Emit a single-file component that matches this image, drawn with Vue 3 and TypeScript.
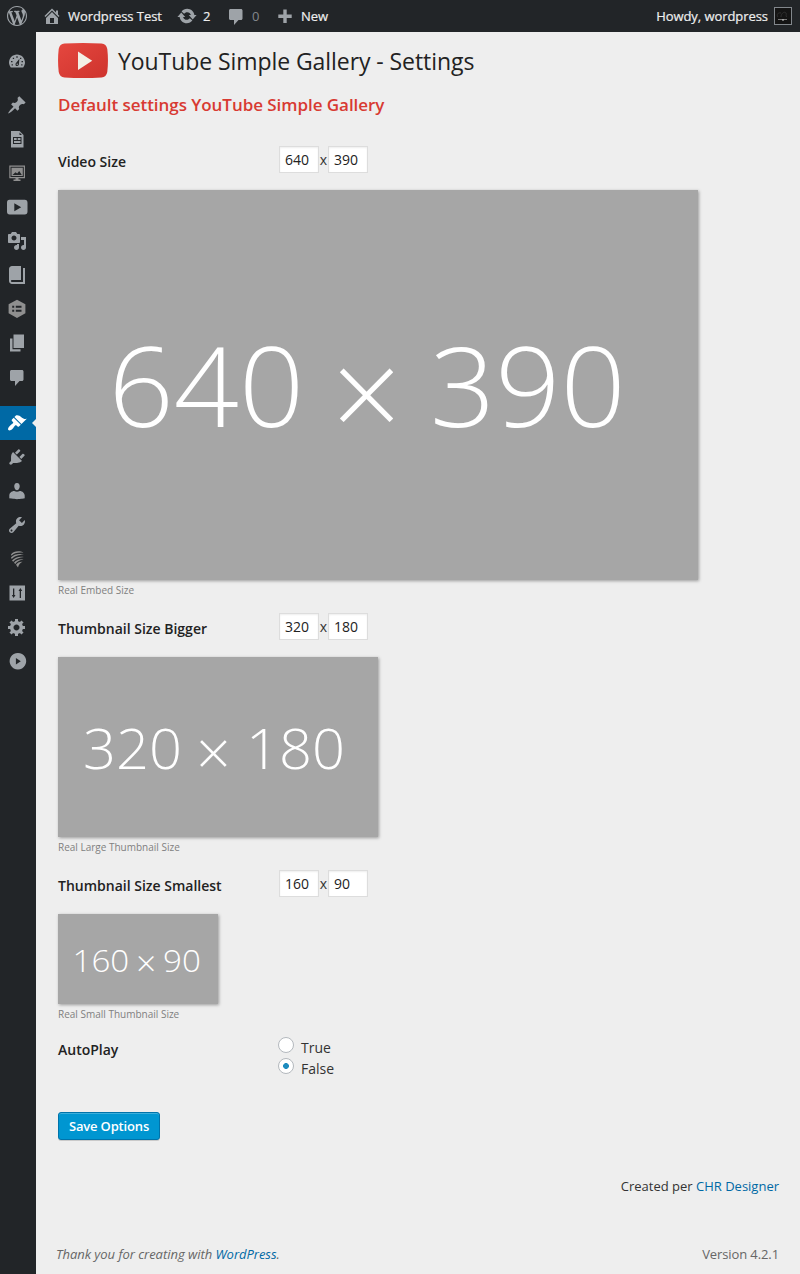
<script setup lang="ts">
import { ref } from 'vue'

interface MenuIcon {
  name: string
  d: string
  gap?: number
  active?: boolean
  muted?: boolean
}

interface Label {
  x: number
  y: number
  size: number
  length?: number
}

interface SizeOption {
  id: string
  label: string
  width: number
  height: number
  caption: string
  w: Label
  cross: Label
  h: Label
}

const logoPath =
  'M20 10c0-5.51-4.49-10-10-10C4.48 0 0 4.49 0 10c0 5.52 4.48 10 10 10 5.51 0 10-4.48 10-10zM7.78 15.37L4.37 6.22c.55-.02 1.17-.08 1.17-.08.5-.06.44-1.13-.06-1.11 0 0-1.45.11-2.37.11-.18 0-.37 0-.58-.01C4.12 2.69 6.87 1.11 10 1.11c2.33 0 4.45.87 6.05 2.34-.68-.11-1.65.39-1.65 1.58 0 .74.45 1.36.9 2.1.35.61.55 1.36.55 2.46 0 1.49-1.4 5-1.4 5l-3.03-8.37c.54-.02.82-.17.82-.17.5-.05.44-1.25-.06-1.22 0 0-1.44.12-2.38.12-.87 0-2.33-.12-2.33-.12-.5-.03-.56 1.2-.06 1.22l.92.08 1.26 3.41zM17.41 10c.24-.64.74-1.87.43-4.25.7 1.29 1.05 2.71 1.05 4.25 0 3.29-1.73 6.24-4.4 7.78.97-2.59 1.94-5.2 2.92-7.78zM6.1 18.09C3.12 16.65 1.11 13.53 1.11 10c0-1.3.23-2.48.72-3.59C3.25 10.3 4.67 14.2 6.1 18.09zm4.03-6.63l2.58 6.98c-.86.29-1.76.45-2.71.45-.79 0-1.57-.11-2.29-.33.81-2.38 1.62-4.74 2.42-7.1z'
const homePath =
  'M16 8.5l1.53 1.53-1.06 1.06L10 4.6l-6.47 6.49-1.06-1.06L10 2.5l4 4v-2h2v4zm-6-2.46l6 5.99V18H4v-5.97zM12 17v-5H8v5h4z'
const updatePath =
  'M10.2 2.800c3.700 0 6.700 2.800 7.200 6.300h2.200l-3.900 4.400-3.900-4.400h2.100c-.45-1.700-1.800-2.900-3.700-2.900-1.300 0-2.400.6-3.100 1.500L4.600 5.400C5.900 3.800 7.900 2.800 10.200 2.800zm-.4 14.400c-3.700 0-6.700-2.800-7.200-6.300H.4l3.900-4.400 3.900 4.400H6.100c.45 1.700 1.800 2.900 3.700 2.900 1.300 0 2.400-.6 3.100-1.500l2.500 2.300c-1.300 1.600-3.300 2.600-5.600 2.600z'
const commentPath =
  'M4.5 3h10.500c.8 0 1.500.7 1.500 1.500v8c0 .8-.7 1.500-1.500 1.500h-2.500L8 19v-5H4.500c-.8 0-1.500-.7-1.500-1.500v-8C3 3.700 3.700 3 4.500 3z'

const menu: MenuIcon[] = [
  {
    name: 'Dashboard',
    d: 'M3.8 16.500h12.400c1.100-1.400 1.800-3.100 1.800-4.900 0-4.400-3.600-8-8-8s-8 3.600-8 8c0 1.800.7 3.500 1.800 4.900zM9.300 5.300h1.400v1.400H9.300zM5.800 6.800h1.300v1.300H5.800zM13 6.800h1.300v1.300H13zM4 10h1.500v1.200H4zM14.500 10H16v1.200h-1.500zM4.600 13.200h1.300v1.200H4.600zM14.200 13.200h1.300v1.200h-1.300zM12.400 7.800l-.5 5.500c-.1 1-.8 1.700-1.700 1.700-1 0-1.700-.7-1.700-1.600 0-.5.200-.9.500-1.300zM10.200 12.500c-.4 0-.7.3-.7.700s.3.7.7.7.7-.3.7-.7-.3-.7-.7-.7z',
  },
  {
    name: 'Posts',
    gap: 10,
    d: 'M10.44 3.02l1.82-1.82 6.36 6.35-1.83 1.82c-1.05-.68-2.48-.57-3.41.36l-.75.75c-.92.93-1.04 2.35-.35 3.41l-1.83 1.82-2.41-2.41-2.8 2.79c-.42.42-3.38 2.71-3.8 2.29s1.86-3.39 2.28-3.81l2.79-2.79L4.1 9.36l1.83-1.82c1.05.69 2.48.57 3.4-.36l.75-.75c.93-.92 1.05-2.35.36-3.41z',
  },
  {
    name: 'Documents',
    d: 'M4 2h8.500l4 4v12.500H4zM12.500 3.500V6H15zM6 8v7h8.500V8zM7 9h2.700v2H7zM10.700 9h2.800v2h-2.800zM7 12h6.500v2H7z',
  },
  {
    name: 'Slides',
    muted: true,
    d: 'M2.300 2.500h15.700v12.700H2.300zM3.500 3.700v10.300h13.300V3.700zM4.500 4.800h11.300v8.200H4.500zM5.500 12h9.300l-2.600-4-2 2.400-1.700-1.200zM8.500 15.200h3v1.300h-3zM6.500 16.500h7V18h-7z',
  },
  {
    name: 'Videos',
    d: 'M2.500 2.800h15.200c1.900 0 2.800 1.200 2.800 3v8.700c0 1.900-.9 3-2.800 3h-15C.8 17.500 0 16.300 0 14.500V5.800c0-1.800.7-3 2.500-3zM7.300 6.300v7.900l6.900-3.900z',
  },
  {
    name: 'Media',
    d: 'M13 11V4c0-.55-.45-1-1-1h-1.67L9 1H5L3.67 3H2c-.55 0-1 .45-1 1v7c0 .55.45 1 1 1h10c.55 0 1-.45 1-1zM7 4.5c1.38 0 2.5 1.12 2.5 2.5S8.38 9.5 7 9.5 4.5 8.38 4.5 7 5.62 4.5 7 4.5zM14 6h5v10.5c0 1.38-1.12 2.5-2.5 2.5S14 17.88 14 16.5s1.12-2.5 2.5-2.5c.17 0 .34.02.5.05V9h-3V6zm-4 8.05V13h2v3.5c0 1.38-1.12 2.5-2.5 2.5S7 17.88 7 16.5 8.12 14 9.5 14c.17 0 .34.02.5.05z',
  },
  {
    name: 'Books',
    d: 'M16 3h2v16H5c-1.66 0-3-1.34-3-3V4c0-1.66 1.34-3 3-3h9v14H5c-.55 0-1 .45-1 1s.45 1 1 1h11V3z',
  },
  {
    name: 'Forms',
    muted: true,
    d: 'M10 .7l8.400 4.600v9L10 19l-8.400-4.700v-9zM5.200 6.800v2h2v-2zM8.800 6.800v2h5.700v-2zM5.200 10.800v2h2v-2zM8.800 10.800v2h5.700v-2z',
  },
  { name: 'Pages', d: 'M6.500 15V1.500h10.500V15zm-1 1.200h8V18.500H3V5.500h2.500v10.700z' },
  { name: 'Comments', d: commentPath },
  {
    name: 'Appearance',
    gap: 12,
    active: true,
    d: 'M14.48 11.06L7.41 3.99l1.5-1.5c.5-.56 2.3-.47 3.51.32 1.21.8 1.43 1.28 2.91 2.1 1.18.64 2.45 1.26 4.45.85zm-.71.71L6.7 4.7 4.93 6.47c-.39.39-.39 1.02 0 1.41l1.06 1.06c.39.39.39 1.03 0 1.42-.6.6-1.43 1.11-2.21 1.69-.35.26-.7.53-1.01.84C1.43 14.23.4 16.08 1.4 17.07c.99 1 2.84-.03 4.18-1.36.31-.31.58-.66.85-1.02.57-.78 1.08-1.61 1.69-2.21.39-.39 1.02-.39 1.41 0l1.06 1.06c.39.39 1.02.39 1.41 0z',
  },
  {
    name: 'Plugins',
    d: 'M13.11 4.36L9.87 7.6 8 5.73l3.24-3.24c.35-.34 1.05-.2 1.56.32.52.51.66 1.21.31 1.55zm-8 1.77l.91-1.12 9.01 9.01-1.19.84c-.71.71-2.63 1.16-3.82 1.16H6.14L4.9 17.26c-.59.59-1.54.59-2.12 0-.59-.58-.59-1.53 0-2.12l1.24-1.24v-3.88c0-1.13.4-3.19 1.09-3.89zm7.26 3.97l3.24-3.24c.34-.35 1.04-.21 1.55.31.52.51.66 1.21.31 1.55l-3.24 3.25z',
  },
  {
    name: 'Users',
    d: 'M10 9.25c-2.27 0-2.73-3.44-2.73-3.44C7 4.02 7.82 2 9.97 2c2.16 0 2.98 2.02 2.71 3.81 0 0-.41 3.44-2.68 3.44zm-2.700.8Q10 11.500 12.700 10c2.800 0 5 2.330 5 4.530v2.800s-3.850.9-7.700.9c-3.850 0-7.700-.9-7.700-.9v-2.800c0-2.250 2.200-4.480 5-4.480z',
  },
  {
    name: 'Tools',
    d: 'M16.68 9.77c-1.34 1.34-3.3 1.67-4.95.99l-5.41 6.52c-.99.99-2.59.99-3.58 0s-.99-2.59 0-3.57l6.52-5.42c-.68-1.65-.35-3.61.99-4.95 1.28-1.28 3.12-1.62 4.72-1.06l-2.89 2.89 2.82 2.82 2.86-2.87c.53 1.58.18 3.39-1.08 4.65zM3.81 16.21c.4.39 1.04.39 1.43 0 .4-.4.4-1.04 0-1.43-.39-.4-1.03-.4-1.43 0-.39.39-.39 1.03 0 1.43z',
  },
  {
    name: 'Security',
    muted: true,
    d: 'M4 5.500C6.500 1.800 13 1.500 16.500 3.800c-4.500-.8-9.500.2-12 3zM4 8.500c3-3.400 8.500-4.200 13-2.800-4.500-.1-9.500 1-12.300 4.400zM5 11.400c3-3.200 7.500-4.500 12-3.300-4.500.2-8.500 1.900-10.800 4.700zM7 13.800c2-2.600 5.500-4 9.500-3.300-3.500.5-6.500 2-8.200 4.500zM9 15.700c1.500-2 3.500-3.200 6.500-3-2.500 1-3.700 3-4.500 5.800z',
  },
  {
    name: 'Controls',
    d: 'M2.500 2.500h15.500v15H2.500zM6 5.500v6.500H4.800L6.600 15l1.900-3H7.300V5.500zM12.700 8H11.500l1.900-3 1.800 3H14v7h-1.300z',
  },
  {
    name: 'Settings',
    d: 'M18 12h-2.18c-.17.7-.44 1.35-.81 1.93l1.54 1.54-2.1 2.1-1.54-1.54c-.58.36-1.23.63-1.91.79V19H8v-2.18c-.68-.16-1.33-.43-1.91-.79l-1.54 1.54-2.12-2.12 1.54-1.54c-.36-.58-.63-1.23-.79-1.91H1V9.03h2.17c.16-.7.44-1.35.8-1.94L2.43 5.55l2.1-2.1 1.54 1.54c.58-.37 1.24-.64 1.93-.81V2h3v2.18c.68.16 1.33.43 1.91.79l1.54-1.54 2.12 2.12-1.54 1.54c.36.59.64 1.24.8 1.94H18V12zm-8.5 1.5c1.66 0 3-1.34 3-3s-1.34-3-3-3-3 1.34-3 3 1.34 3 3 3z',
  },
  {
    name: 'Collapse menu',
    d: 'M10.900 1.900a8.300 8.300 0 1 0 .01 0zM8.900 7v6.600l4.900-3.300z',
  },
]

const sizes = ref<SizeOption[]>([
  {
    id: 'video',
    label: 'Video Size',
    width: 640,
    height: 390,
    caption: 'Real Embed Size',
    w: { x: 50.5, y: 237, size: 111, length: 195.6 },
    cross: { x: 308.5, y: 248.7, size: 123 },
    h: { x: 372.1, y: 237, size: 111, length: 195.6 },
  },
  {
    id: 'large',
    label: 'Thumbnail Size Bigger',
    width: 320,
    height: 180,
    caption: 'Real Large Thumbnail Size',
    w: { x: 25, y: 111.5, size: 55.5, length: 99 },
    cross: { x: 155.3, y: 117.8, size: 61 },
    h: { x: 188, y: 111.5, size: 55.5, length: 99 },
  },
  {
    id: 'small',
    label: 'Thumbnail Size Smallest',
    width: 160,
    height: 90,
    caption: 'Real Small Thumbnail Size',
    w: { x: 14.5, y: 57.5, size: 31, length: 56.7 },
    cross: { x: 88.2, y: 61.5, size: 35.5 },
    h: { x: 105, y: 57.5, size: 31, length: 37.8 },
  },
])
const autoplay = ref('false')
</script>

<template>
  <div class="admin">
    <header class="bar">
      <svg class="ico logo" viewBox="0 0 20 20"><path :d="logoPath" /></svg>
      <svg class="ico home" viewBox="0 0 20 20"><path :d="homePath" /></svg>
      <span class="site">Wordpress Test</span>
      <svg class="ico" viewBox="0 0 20 20"><path :d="updatePath" /></svg>
      <span class="updates">2</span>
      <svg class="ico" viewBox="0 0 20 20"><path :d="commentPath" /></svg>
      <span class="count">0</span>
      <svg class="ico" viewBox="0 0 20 20"><path d="M8.300 3.500h3.400v5h5v3.400h-5v5H8.300v-5h-5V8.500h5z" /></svg>
      <span class="new">New</span>
      <span class="howdy">Howdy, wordpress</span>
      <svg class="avatar" viewBox="0 0 18 18">
        <rect x=".5" y=".5" width="17" height="17" fill="#141414" stroke="#82878c" />
        <path d="M4 10c-2-2 0-5 3-4M7 10c0-4 4-6 5-4s-1 3 1 4" fill="none" stroke="#303030" />
        <path d="M4 12.500h9" stroke="#777" />
        <path d="M8 13h2" stroke="#ccc" />
      </svg>
    </header>
    <div class="body">
      <nav class="menu">
        <a
          v-for="item in menu"
          :key="item.name"
          class="item"
          :class="{ active: item.active, muted: item.muted }"
          :style="{ marginTop: (item.gap ?? 0) + 'px' }"
          :aria-label="item.name"
        >
          <svg class="glyph" viewBox="0 0 20 20"><path fill-rule="evenodd" :d="item.d" /></svg>
        </a>
      </nav>
      <main class="content">
        <div class="title">
          <svg class="yt" viewBox="0 0 50 35">
            <defs>
              <linearGradient id="ytRed" x1="0" y1="0" x2="1" y2="1">
                <stop offset="0" stop-color="#e5473f" />
                <stop offset="1" stop-color="#ce332d" />
              </linearGradient>
            </defs>
            <path fill="url(#ytRed)" d="M6.500.6Q25-.6 43.500.6Q48.300.9 49.300 6Q50.600 17.500 49.300 29Q48.300 34.100 43.500 34.400Q25 35.600 6.500 34.400Q1.700 34.100.7 29Q-.6 17.500.7 6Q1.700.9 6.500.6z" />
            <path fill="#f3efe6" d="M20 8.500v18.500l14.200-9.300z" />
          </svg>
          <h1>YouTube Simple Gallery - Settings</h1>
        </div>
        <h2>Default settings YouTube Simple Gallery</h2>
        <section v-for="s in sizes" :key="s.id" class="option">
          <div class="row">
            <span class="label">{{ s.label }}</span>
            <input class="num" type="text" :value="s.width" />
            <span class="times">x</span>
            <input class="num" type="text" :value="s.height" />
          </div>
          <svg class="preview" :width="s.width" :height="s.height">
            <text :x="s.w.x" :y="s.w.y" :font-size="s.w.size" :textLength="s.w.length" lengthAdjust="spacingAndGlyphs">{{ s.width }}</text>
            <text :x="s.cross.x" :y="s.cross.y" :font-size="s.cross.size" text-anchor="middle">×</text>
            <text :x="s.h.x" :y="s.h.y" :font-size="s.h.size" :textLength="s.h.length" lengthAdjust="spacingAndGlyphs">{{ s.height }}</text>
          </svg>
          <p class="caption">{{ s.caption }}</p>
        </section>
        <div class="autoplay">
          <span class="label">AutoPlay</span>
          <div class="radios">
            <label class="choice"><input v-model="autoplay" type="radio" value="true" />True</label>
            <label class="choice"><input v-model="autoplay" type="radio" value="false" />False</label>
          </div>
        </div>
        <button class="save" type="button">Save Options</button>
        <p class="credit">Created per <a>CHR Designer</a></p>
        <footer class="foot">
          <em>Thank you for creating with <a>WordPress</a>.</em>
          <span class="version">Version 4.2.1</span>
        </footer>
      </main>
    </div>
  </div>
</template>

<style>
body {
  background: #eee;
}
</style>

<style scoped>
.admin {
  width: 800px;
  height: 1274px;
  display: flex;
  flex-direction: column;
  overflow: hidden;
  background: #eee;
  font: 13px/18px "Open Sans", sans-serif;
  color: #333;
}
.bar {
  height: 32px;
  flex: none;
  display: flex;
  align-items: center;
  box-sizing: border-box;
  padding: 0 8px 0 7px;
  background: #222528;
  color: #eee;
  line-height: 32px;
  letter-spacing: -0.06px;
  white-space: nowrap;
  -webkit-text-stroke: 0.2px;
}
.ico {
  width: 20px;
  height: 20px;
  flex: none;
  margin-right: 6px;
  fill: #9ea3a8;
}
.logo { margin-right: 15px; }
.site { width: 109px; }
.updates { width: 23px; }
.count {
  width: 23px;
  color: #82878c;
  -webkit-text-stroke: 0;
}
.howdy { margin-left: auto; margin-right: 6px; }
.avatar { width: 18px; height: 18px; }
.body {
  flex: 1;
  display: flex;
}
.menu {
  width: 36px;
  flex: none;
  box-sizing: border-box;
  padding-top: 12px;
  background: #222528;
}
.item {
  display: flex;
  align-items: center;
  justify-content: center;
  box-sizing: border-box;
  height: 34px;
  padding: 0 2px 1px 0;
  position: relative;
}
.glyph {
  width: 20px;
  height: 20px;
  fill: #9ea3a8;
  overflow: visible;
}
.muted .glyph { fill: #8f8f8f; }
.active { background: #0069a5; }
.active .glyph { fill: #fff; }
.active::after {
  content: "";
  position: absolute;
  right: 0;
  top: 13px;
  border: 4px solid transparent;
  border-left: 0;
  border-right-color: #eee;
}
.content {
  flex: 1;
  box-sizing: border-box;
  padding: 11px 21px 0 22px;
  display: flex;
  flex-direction: column;
}
.title {
  display: flex;
  align-items: center;
  height: 35px;
}
.yt { width: 50px; height: 35px; margin-right: 10px; }
h1 {
  margin: 1px 0 0;
  font-size: 23px;
  font-weight: 400;
  line-height: 29px;
  letter-spacing: -0.07px;
  color: #222;
}
h2 {
  margin: 15px 0 29px;
  height: 24px;
  font-size: 17px;
  font-weight: 600;
  line-height: 24px;
  letter-spacing: -0.05px;
  color: #d83a32;
}
.option { height: 257px; }
.option:nth-of-type(1) { height: 467px; }
.row {
  display: flex;
  align-items: flex-start;
  height: 44px;
}
.label {
  width: 221px;
  padding-top: 7px;
  font-size: 14px;
  font-weight: 600;
  color: #222;
}
.num {
  width: 40px;
  height: 27px;
  box-sizing: border-box;
  padding: 0 5px;
  border: 1px solid #ddd;
  border-radius: 0;
  background: #fff;
  box-shadow: inset 0 1px 2px rgba(0, 0, 0, 0.07);
  font: 14px/25px "Open Sans", sans-serif;
  color: #222;
  outline: 0;
}
.times {
  width: 9px;
  padding-top: 5px;
  text-align: center;
  font-size: 14px;
}
.preview {
  display: block;
  background: #a6a6a6;
  box-shadow: 1px 1px 3px rgba(0, 0, 0, 0.35);
}
.preview text {
  fill: #fff;
  font-family: "Open Sans", sans-serif;
  font-weight: 300;
}
.caption {
  margin: 3px 0 0;
  font-size: 10px;
  line-height: 15px;
  color: #808080;
}
.option:nth-of-type(3) { height: 167px; }
.autoplay {
  display: flex;
  height: 75px;
}
.autoplay .label { padding-top: 4px; }
.choice {
  display: flex;
  align-items: flex-start;
  height: 21px;
  font-size: 14px;
  line-height: 22px;
}
.choice input {
  appearance: none;
  width: 16px;
  height: 16px;
  margin: 0 7px 0 -1px;
  box-sizing: border-box;
  border: 1px solid #b4b9be;
  border-radius: 50%;
  background: #fff;
}
.choice input:checked {
  background: radial-gradient(circle, #1e8cbe 0 2.600px, #fff 3.200px);
}
.save {
  width: 102px;
  height: 28px;
  padding: 0;
  border: 1px solid #0073aa;
  border-radius: 3px;
  background: #0096d1;
  box-shadow: inset 0 1px 0 rgba(120, 200, 230, 0.5), 0 1px 0 rgba(0, 0, 0, 0.15);
  font: 600 13px/26px "Open Sans", sans-serif;
  letter-spacing: -0.16px;
  color: #fff;
}
.credit {
  margin: 37px 0 0;
  text-align: right;
}
.credit a,
.foot a { color: #0069a5; }
.foot {
  display: flex;
  justify-content: space-between;
  margin: 50px 0 0 -2px;
  letter-spacing: -0.03px;
  color: #666;
}
.version { letter-spacing: -0.1px; }
</style>
